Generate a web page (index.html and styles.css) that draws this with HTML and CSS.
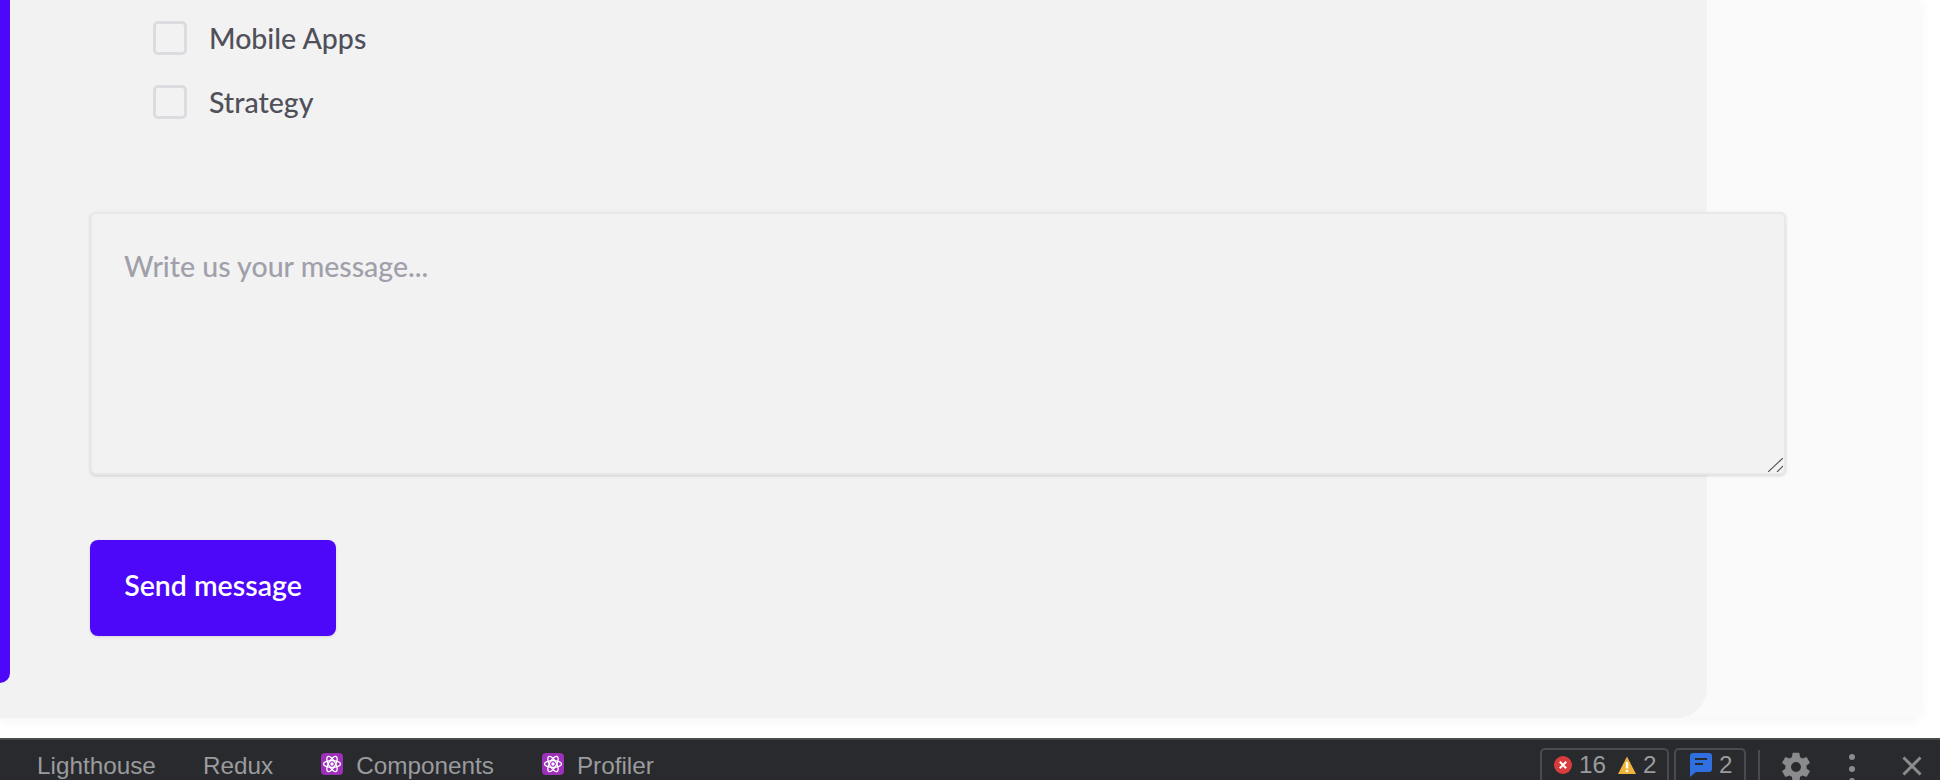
FILE: index.html
```html
<!DOCTYPE html>
<html lang="en">
<head>
    <meta charset="UTF-8">
    <title>Contact form</title>
    <link rel="stylesheet" href="styles.css">
</head>
<body>
    <div class="page">
        <div class="card">
            <div class="accent"></div>
            <form class="panel">
                <div class="options">
                    <label class="option"><input type="checkbox"> Mobile Apps</label>
                    <label class="option"><input type="checkbox"> Strategy</label>
                </div>
                <div class="message-box">
                    <textarea class="message" placeholder="Write us your message..."></textarea>
                    <svg class="grip" viewBox="0 0 15 14">
                        <path d="M0 14L15 0M9 14l6-6" stroke="#555" stroke-width="1.2" fill="none"/>
                    </svg>
                </div>
                <button type="button" class="send">Send message</button>
            </form>
        </div>
    </div>

    <div class="devtools">
        <div class="tabs">
            <span class="tab">Lighthouse</span>
            <span class="tab">Redux</span>
            <span class="tab">
                <svg class="atom" viewBox="0 0 24 24">
                    <rect x="1" y="1" width="22" height="22" rx="4" fill="#9c30b8"/>
                    <g fill="none" stroke="#fff" stroke-width="1.3">
                        <ellipse cx="12" cy="12" rx="8.5" ry="3.4"/>
                        <ellipse cx="12" cy="12" rx="8.5" ry="3.4" transform="rotate(60 12 12)"/>
                        <ellipse cx="12" cy="12" rx="8.5" ry="3.4" transform="rotate(120 12 12)"/>
                    </g>
                    <circle cx="12" cy="12" r="1.7" fill="#fff"/>
                </svg>
                Components
            </span>
            <span class="tab">
                <svg class="atom" viewBox="0 0 24 24">
                    <rect x="1" y="1" width="22" height="22" rx="4" fill="#9c30b8"/>
                    <g fill="none" stroke="#fff" stroke-width="1.3">
                        <ellipse cx="12" cy="12" rx="8.5" ry="3.4"/>
                        <ellipse cx="12" cy="12" rx="8.5" ry="3.4" transform="rotate(60 12 12)"/>
                        <ellipse cx="12" cy="12" rx="8.5" ry="3.4" transform="rotate(120 12 12)"/>
                    </g>
                    <circle cx="12" cy="12" r="1.7" fill="#fff"/>
                </svg>
                Profiler
            </span>
        </div>
        <div class="tools">
            <div class="counter counter-issues">
                <svg class="status" viewBox="0 0 18 18">
                    <circle cx="9" cy="9" r="9" fill="#d93c3c"/>
                    <path d="M5.8 5.8l6.4 6.4M12.2 5.8l-6.4 6.4" stroke="#fff" stroke-width="2"/>
                </svg>
                <span class="count">16</span>
                <svg class="status status-warn" viewBox="0 0 18 18">
                    <path d="M9 0.5L18 18H0z" fill="#eeb43c"/>
                    <path d="M9 6v6.5M9 14v2" stroke="#fff" stroke-width="2.4"/>
                </svg>
                <span class="count">2</span>
            </div>
            <div class="counter counter-messages">
                <svg class="bubble" viewBox="0 0 22 24">
                    <path d="M3 0h16a3 3 0 0 1 3 3v13a3 3 0 0 1-3 3H6l-6 5V3a3 3 0 0 1 3-3z" fill="#2f6fe0"/>
                    <path d="M5 6h12M5 11h8" stroke="#292a2d" stroke-width="2.2"/>
                </svg>
                <span class="count">2</span>
            </div>
            <div class="divider"></div>
            <svg class="gear" viewBox="0 0 24 24">
                <path fill="#8a8b8d" d="M19.4 13c.04-.32.07-.66.07-1s-.03-.68-.07-1l2.1-1.65c.2-.15.25-.42.13-.64l-2-3.46c-.12-.22-.39-.3-.61-.22l-2.49 1c-.52-.4-1.08-.73-1.69-.98l-.38-2.65A.49.49 0 0 0 14 2h-4c-.25 0-.46.18-.49.42l-.38 2.65c-.61.25-1.17.59-1.69.98l-2.49-1c-.23-.09-.49 0-.61.22l-2 3.46c-.13.22-.07.49.12.64L4.57 11c-.04.32-.07.66-.07 1s.03.68.07 1l-2.11 1.65c-.19.15-.24.42-.12.64l2 3.46c.12.22.39.3.61.22l2.49-1c.52.4 1.08.73 1.69.98l.38 2.65c.03.24.24.42.49.42h4c.25 0 .46-.18.49-.42l.38-2.65c.61-.25 1.17-.59 1.69-.98l2.49 1c.23.09.49 0 .61-.22l2-3.46c.12-.22.07-.49-.12-.64L19.4 13zM12 15.5a3.5 3.5 0 1 1 0-7 3.5 3.5 0 0 1 0 7z"/>
            </svg>
            <div class="kebab"><i></i><i></i><i></i></div>
            <svg class="close" viewBox="0 0 20 20">
                <path d="M1.5 1.5l17 17M18.5 1.5l-17 17" stroke="#8a8b8d" stroke-width="3"/>
            </svg>
        </div>
    </div>
</body>
</html>
```

FILE: styles.css
```css
* {
    box-sizing: border-box;
}
html, body {
    margin: 0;
    height: 780px;
    overflow: hidden;
    background: #fff;
}
.page {
    height: 738px;
}
.card {
    position: relative;
    width: 1920px;
    height: 718px;
    background: #fafafa;
    border-bottom-right-radius: 8px;
    box-shadow: 0 2px 12px rgba(0, 0, 0, 0.05);
}
.accent {
    position: absolute;
    left: 0;
    top: 0;
    width: 10px;
    height: 683px;
    background: #4d07f9;
    border-bottom-right-radius: 10px;
}
.panel {
    width: 1707px;
    height: 718px;
    padding: 21px 0 0 90px;
    background: #f2f2f2;
    border-bottom-right-radius: 30px;
    font-family: "Lato", sans-serif;
}
.options {
    display: flex;
    flex-direction: column;
    gap: 30px;
    padding-left: 63px;
}
.option {
    display: flex;
    align-items: center;
    gap: 22px;
    height: 34px;
    font-size: 28.5px;
    font-weight: 500;
    color: #50505a;
}
.option input {
    appearance: none;
    width: 34px;
    height: 34px;
    margin: 0;
    border: 3px solid #dcdce0;
    border-radius: 5px;
}
.message-box {
    position: relative;
    width: 1696px;
    height: 263px;
    margin-top: 93px;
}
.message {
    display: block;
    width: 100%;
    height: 100%;
    padding: 35px 32px;
    background: #f2f2f2;
    border: 2px solid #e8e8e8;
    border-radius: 6px;
    box-shadow: 0 1px 3px rgba(0, 0, 0, 0.15);
    font-family: inherit;
    font-size: 28.5px;
    font-weight: 500;
    outline: none;
    resize: none;
}
.message::placeholder {
    color: #a0a0ab;
}
.grip {
    position: absolute;
    right: 3px;
    bottom: 3px;
    width: 15px;
    height: 14px;
}
.send {
    display: block;
    width: 246px;
    height: 96px;
    margin-top: 65px;
    padding: 0 0 6px;
    background: #4d07f9;
    border: 0;
    border-radius: 8px;
    box-shadow: 0 1px 3px rgba(0, 0, 0, 0.12);
    color: #fff;
    font-family: inherit;
    font-size: 28.5px;
    font-weight: 600;
}
.devtools {
    display: flex;
    justify-content: space-between;
    height: 42px;
    background: #292a2d;
    border-top: 2px solid #4a4b4e;
    font-family: "Liberation Sans", Arial, sans-serif;
    font-size: 24.3px;
    color: #9a9b9d;
    overflow: hidden;
}
.tabs {
    display: flex;
    gap: 47px;
    padding: 12px 0 0 37px;
}
.tab {
    display: flex;
    align-items: flex-start;
    gap: 12px;
    white-space: nowrap;
}
.atom {
    width: 24px;
    height: 24px;
    flex: none;
}
.tools {
    display: flex;
    align-items: flex-start;
    padding-top: 8px;
}
.counter {
    display: flex;
    align-items: center;
    height: 40px;
    padding: 0 12px 8px 14px;
    border: 2px solid #4a4b4e;
    border-bottom: 0;
    border-radius: 5px 5px 0 0;
}
.counter-issues {
    width: 129px;
    padding-left: 12px;
}
.counter-messages {
    width: 72px;
    margin-left: 5px;
}
.status {
    width: 18px;
    height: 18px;
    flex: none;
}
.status-warn {
    margin-left: 12px;
}
.bubble {
    width: 22px;
    height: 24px;
    flex: none;
}
.count {
    margin-left: 7px;
}
.divider {
    width: 2px;
    height: 30px;
    margin: 2px 0 0 12px;
    background: #4a4b4e;
}
.gear {
    width: 34px;
    height: 34px;
    margin: 2px 0 0 19px;
    flex: none;
}
.kebab {
    display: flex;
    flex-direction: column;
    gap: 6px;
    margin: 6px 0 0 36px;
}
.kebab i {
    width: 6px;
    height: 6px;
    border-radius: 50%;
    background: #8a8b8d;
}
.close {
    width: 20px;
    height: 20px;
    margin: 8px 18px 0 47px;
    flex: none;
}
```
